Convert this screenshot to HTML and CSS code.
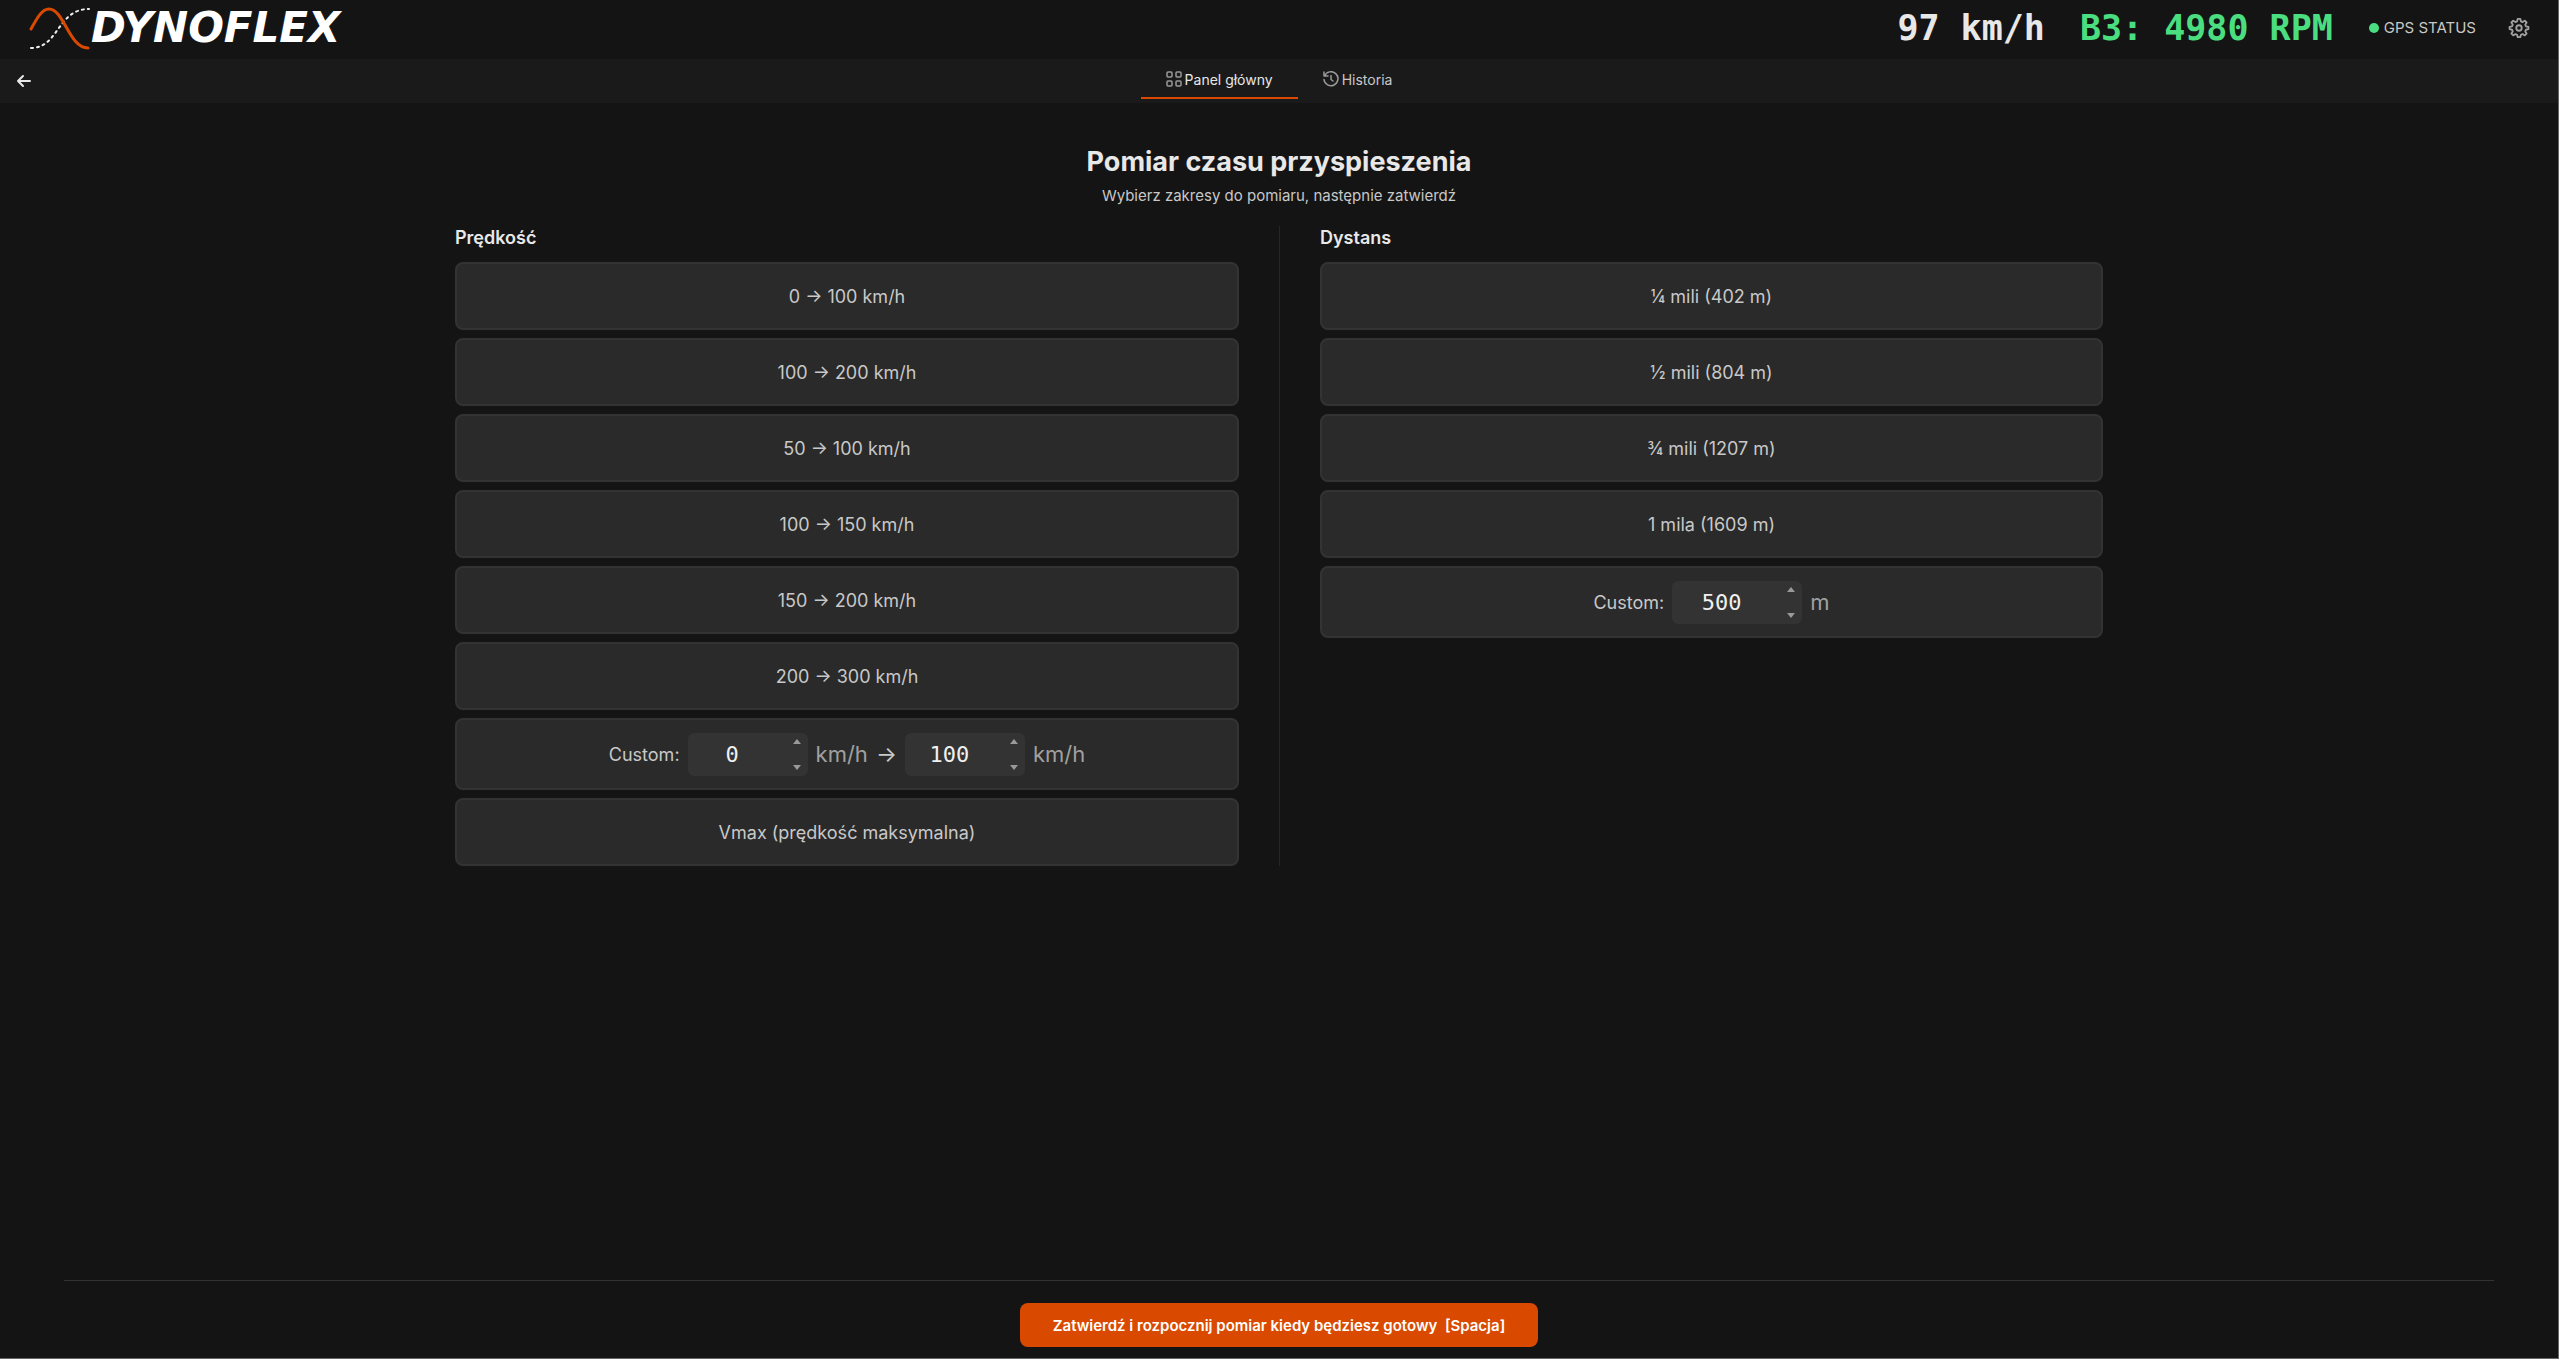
FILE: index.html
```
<!DOCTYPE html>
<html lang="pl">
<head>
    <meta charset="UTF-8">
    <meta name="viewport" content="width=device-width, initial-scale=1.0">
    <title>DynoFlex - Pomiar czasu przyspieszenia</title>
    <link rel="stylesheet" href="styles.css">
</head>
<body>
    <header class="topbar">
        <a class="logo" href="#" aria-label="DYNOFLEX">
            <svg class="logo-mark" viewBox="0 0 64 48" fill="none" stroke-linecap="round">
                <path d="M4 44 C32 44 30 5 62 5" stroke="#eee" stroke-width="2" stroke-dasharray="2 4"/>
                <path d="M4 25 C10 14 15 5 22 5 C37 5 42 44 61 44" stroke="#d94a00" stroke-width="3"/>
            </svg>
            <span class="logo-text">DYNOFLEX</span>
        </a>
        <div class="readouts">
            <span class="speed">97 km/h</span>
            <span class="rpm">B3: 4980 RPM</span>
            <span class="gps"><span class="gps-dot"></span>GPS STATUS</span>
            <button class="icon-button" type="button" aria-label="Ustawienia">
                <svg class="gear" viewBox="0 0 24 24" fill="none" stroke="currentColor" stroke-width="2" stroke-linejoin="round">
                    <path d="M10.6 2h2.800l.7 2.700 1.800.8 2.400-1.500 2 2-1.500 2.400.8 1.800 2.700.6v2.400l-2.700.7-.8 1.800 1.500 2.400-2 2-2.400-1.500-1.800.8-.7 2.600h-2.800l-.7-2.600-1.800-.8-2.400 1.500-2-2 1.500-2.400-.8-1.800L1.700 13.200v-2.400l2.700-.6.8-1.800L3.700 6l2-2 2.400 1.500 1.800-.8z"/>
                    <circle cx="12" cy="12" r="3"/>
                </svg>
            </button>
        </div>
    </header>

    <nav class="subnav">
        <button class="icon-button back" type="button" aria-label="Wstecz">
            <svg viewBox="0 0 16 16" fill="none" stroke="currentColor" stroke-width="2" stroke-linecap="round" stroke-linejoin="round">
                <path d="M14 8H2M7 3L2 8l5 5"/>
            </svg>
        </button>
        <div class="tabs">
            <a class="tab active" href="#">
                <svg viewBox="0 0 16 16" fill="none" stroke="currentColor" stroke-width="1.5">
                    <rect x="1" y="1" width="5" height="5" rx="1"/>
                    <rect x="10" y="1" width="5" height="5" rx="1"/>
                    <rect x="1" y="10" width="5" height="5" rx="1"/>
                    <rect x="10" y="10" width="5" height="5" rx="1"/>
                </svg>
                Panel główny
            </a>
            <a class="tab" href="#">
                <svg viewBox="0 0 16 16" fill="none" stroke="currentColor" stroke-width="1.5" stroke-linecap="round" stroke-linejoin="round">
                    <path d="M1 1v4h4M1.500 5A7 7 0 1 1 1 8.500M8 4.500V8.500l2 1.500"/>
                </svg>
                Historia
            </a>
        </div>
    </nav>

    <main class="content">
        <h1>Pomiar czasu przyspieszenia</h1>
        <p class="subtitle">Wybierz zakresy do pomiaru, następnie zatwierdź</p>

        <div class="columns">
            <section class="column">
                <h2>Prędkość</h2>
                <button class="option" type="button">0 → 100 km/h</button>
                <button class="option" type="button">100 → 200 km/h</button>
                <button class="option" type="button">50 → 100 km/h</button>
                <button class="option" type="button">100 → 150 km/h</button>
                <button class="option" type="button">150 → 200 km/h</button>
                <button class="option" type="button">200 → 300 km/h</button>
                <div class="option custom">
                    <label for="speed-from">Custom:</label>
                    <span class="number">
                        <input id="speed-from" type="number" value="0">
                        <span class="steps"><i class="up"></i><i class="down"></i></span>
                    </span>
                    <span class="unit">km/h</span>
                    <span class="arrow">→</span>
                    <span class="number">
                        <input type="number" value="100" aria-label="Prędkość końcowa">
                        <span class="steps"><i class="up"></i><i class="down"></i></span>
                    </span>
                    <span class="unit">km/h</span>
                </div>
                <button class="option" type="button">Vmax (prędkość maksymalna)</button>
            </section>

            <section class="column">
                <h2>Dystans</h2>
                <button class="option" type="button">¼ mili (402 m)</button>
                <button class="option" type="button">½ mili (804 m)</button>
                <button class="option" type="button">¾ mili (1207 m)</button>
                <button class="option" type="button">1 mila (1609 m)</button>
                <div class="option custom">
                    <label for="distance">Custom:</label>
                    <span class="number wide">
                        <input id="distance" type="number" value="500">
                        <span class="steps"><i class="up"></i><i class="down"></i></span>
                    </span>
                    <span class="unit">m</span>
                </div>
            </section>
        </div>
    </main>

    <footer class="footer">
        <button class="confirm" type="button">Zatwierdź i rozpocznij pomiar kiedy będziesz gotowy&nbsp; [Spacja]</button>
    </footer>
</body>
</html>
```
FILE: styles.css
```
* {
    box-sizing: border-box;
}
body {
    margin: 0;
    min-height: 100vh;
    display: flex;
    flex-direction: column;
    border: solid #666;
    border-width: 0 1px 1px 0;
    background: #141414;
    color: #c8c8c8;
    font-family: Inter, "Liberation Sans", sans-serif;
    font-size: 16px;
}
button,
input {
    font: inherit;
    color: inherit;
}
a {
    color: inherit;
    text-decoration: none;
}

/* top bar */
.topbar {
    display: flex;
    justify-content: space-between;
    align-items: center;
    height: 59px;
    padding: 0 28px 4px 27px;
}
.logo {
    display: flex;
    align-items: center;
}
.logo-mark {
    width: 64px;
    height: 48px;
}
.logo-text {
    color: #fff;
    font-family: "DejaVu Sans", sans-serif;
    font-size: 42px;
    font-weight: bold;
    font-style: italic;
    line-height: 48px;
}
.readouts {
    display: flex;
    align-items: center;
}
.speed,
.rpm {
    font-family: "DejaVu Sans Mono", monospace;
    font-size: 35px;
    font-weight: bold;
    line-height: 48px;
    white-space: pre;
}
.speed {
    color: #e8e8e8;
    margin-right: 35px;
}
.rpm {
    color: #4ade80;
    margin-right: 36px;
}
.gps {
    display: flex;
    align-items: center;
    gap: 5px;
    margin-right: 32px;
    font-size: 15px;
}
.gps-dot {
    width: 10px;
    height: 10px;
    border-radius: 50%;
    background: #4ade80;
}
.icon-button {
    display: flex;
    padding: 0;
    border: none;
    background: none;
    cursor: pointer;
}
.gear {
    width: 22px;
    height: 22px;
    color: #a0a0a0;
}

/* navigation */
.subnav {
    display: grid;
    grid-template-columns: 1fr auto 1fr;
    align-items: center;
    height: 44px;
    padding: 0 16px;
    background: #1a1a1a;
}
.back {
    color: #e8e8e8;
}
.back svg,
.tab svg {
    width: 16px;
    height: 16px;
}
.tabs {
    display: flex;
    align-self: stretch;
    padding-bottom: 4px;
}
.tab {
    display: flex;
    align-items: center;
    gap: 3px;
    padding: 2px 25px 0;
    border-bottom: 2px solid transparent;
    font-size: 14px;
}
.tab svg {
    color: #999;
}
.tab.active {
    color: #e8e8e8;
    border-color: #d94a00;
}

/* content */
.content {
    flex: 1;
    width: 100%;
    max-width: 1648px;
    margin: 0 auto;
    padding-top: 41px;
}
h1 {
    margin: 0;
    color: #e8e8e8;
    font-size: 27px;
    font-weight: 700;
    line-height: 36px;
    text-align: center;
}
.subtitle {
    margin: 6px 0 20px;
    font-size: 15px;
    line-height: 20px;
    text-align: center;
}
.columns {
    display: grid;
    grid-template-columns: 1fr 1fr;
}
.column {
    display: flex;
    flex-direction: column;
    gap: 8px;
    padding-right: 40px;
}
.column + .column {
    padding: 0 0 0 40px;
    border-left: 1px solid #262626;
}
h2 {
    margin: 0 0 4px;
    color: #e8e8e8;
    font-size: 18px;
    font-weight: 600;
    line-height: 24px;
}
.option {
    display: flex;
    align-items: center;
    justify-content: center;
    min-height: 68px;
    padding: 0 16px;
    border: 2px solid #333;
    border-radius: 8px;
    background: #2a2a2a;
    font-size: 18px;
}
button.option {
    cursor: pointer;
}
.custom {
    gap: 8px;
    min-height: 72px;
}
.number {
    display: flex;
    width: 120px;
    height: 43px;
    padding-right: 7px;
    border-radius: 6px;
    background: #333;
}
.number.wide {
    width: 130px;
}
.number input {
    flex: 1;
    min-width: 0;
    padding: 0 28px 0 12px;
    border: none;
    background: none;
    color: #f0f0f0;
    font-family: "DejaVu Sans Mono", monospace;
    font-size: 22px;
    text-align: center;
    appearance: textfield;
}
.number input::-webkit-inner-spin-button {
    display: none;
}
.steps {
    display: flex;
    flex-direction: column;
    justify-content: space-between;
    padding: 6px 0;
}
.up,
.down {
    border: 4px solid transparent;
}
.up {
    border-top: none;
    border-bottom: 5px solid #999;
}
.down {
    border-bottom: none;
    border-top: 5px solid #999;
}
.unit,
.arrow {
    font-size: 22px;
}
.unit {
    color: #a0a0a0;
}

/* footer */
.footer {
    display: flex;
    justify-content: center;
    margin: 0 64px;
    padding: 22px 0 11px;
    border-top: 1px solid #333;
}
.confirm {
    height: 44px;
    padding: 0 33px;
    border: none;
    border-radius: 8px;
    background: #d94a00;
    color: #fff;
    font-size: 15px;
    font-weight: 600;
    cursor: pointer;
}
```
